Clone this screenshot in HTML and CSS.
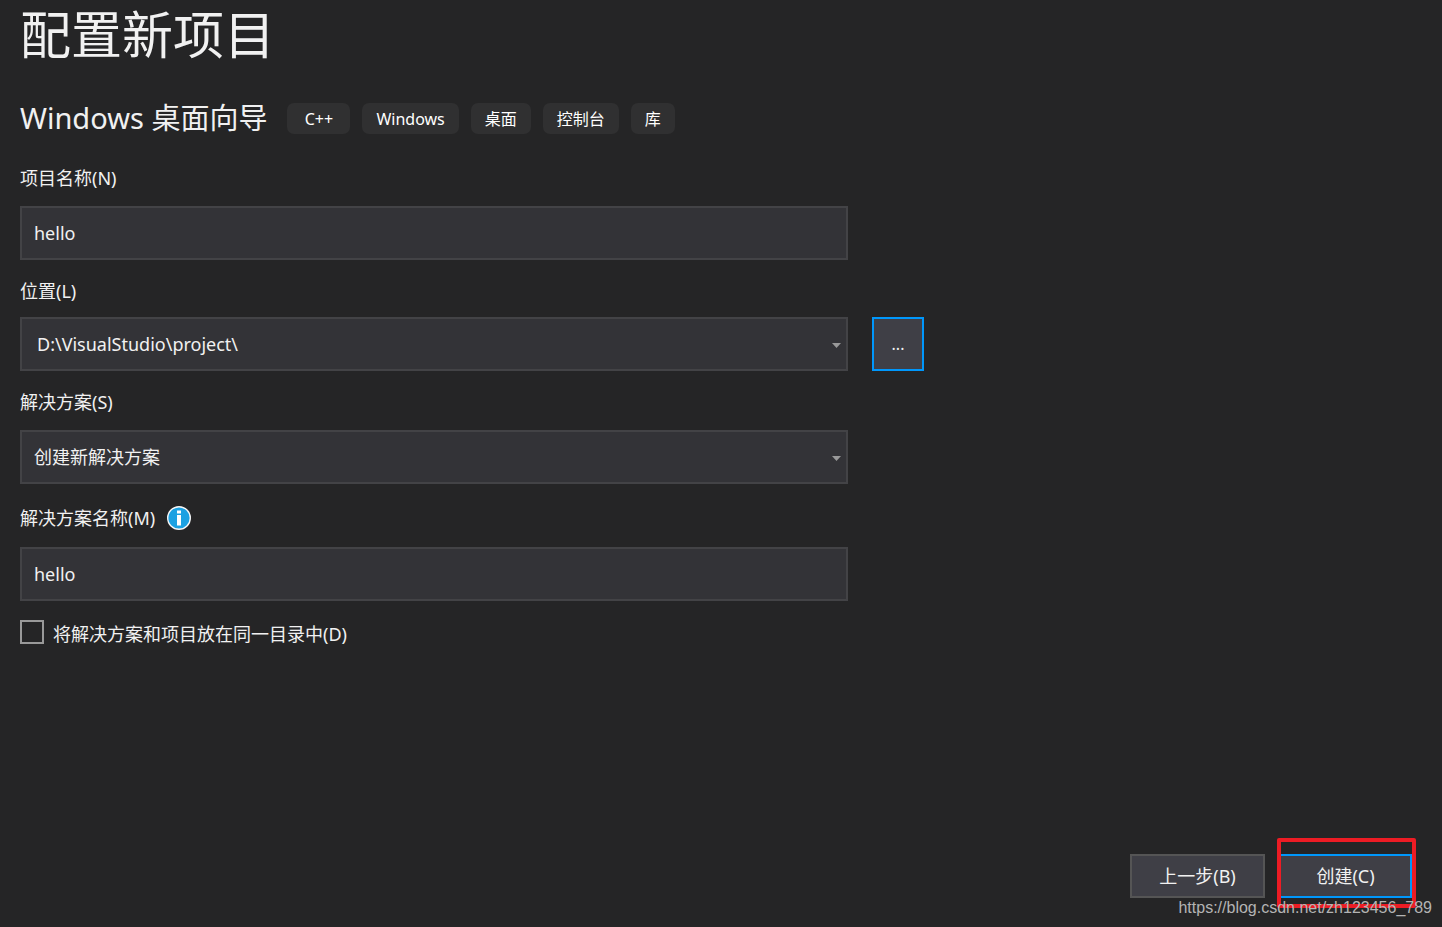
FILE: index.html
```html
<!DOCTYPE html>
<html lang="zh-CN">
<head>
<meta charset="utf-8">
<meta name="viewport" content="width=device-width, initial-scale=1">
<title>配置新项目</title>
<link rel="stylesheet" href="styles.css">
</head>
<body>
<form class="page">
  <h1 class="title">配置新项目</h1>
  <div class="template">
    <h2 class="template-name">Windows 桌面向导</h2>
    <ul class="tags">
      <li class="tag tag-language">C++</li>
      <li class="tag">Windows</li>
      <li class="tag">桌面</li>
      <li class="tag">控制台</li>
      <li class="tag">库</li>
    </ul>
  </div>

  <div class="fields">
    <div class="field">
      <label class="label" for="project-name">项目名称(N)</label>
      <input class="box" id="project-name" type="text" value="hello">
    </div>
    <div class="field field-location">
      <label class="label" for="location">位置(L)</label>
      <div class="location-row">
        <div class="combo">
          <select class="box box-path" id="location"><option>D:\VisualStudio\project\</option></select>
          <svg class="arrow" viewBox="0 0 9 5" aria-hidden="true"><path d="M0 0h9L4.500 5z"/></svg>
        </div>
        <button class="button browse" type="button">...</button>
      </div>
    </div>
    <div class="field">
      <label class="label" for="solution">解决方案(S)</label>
      <div class="combo">
        <select class="box" id="solution"><option>创建新解决方案</option></select>
        <svg class="arrow" viewBox="0 0 9 5" aria-hidden="true"><path d="M0 0h9L4.500 5z"/></svg>
      </div>
    </div>
    <div class="field field-solution-name">
      <div class="label-row">
        <label class="label" for="solution-name">解决方案名称(M)</label>
        <svg class="info" viewBox="0 0 24 24" aria-hidden="true">
          <circle cx="12" cy="12" r="11.300" fill="#1ba1e2" stroke="#f5f5f5" stroke-width="1.400"/>
          <path fill="#fff" d="M10 4.500h4v3h-4zM10 9h4v10.500h-4z"/>
        </svg>
      </div>
      <input class="box" id="solution-name" type="text" value="hello">
    </div>
    <div class="check">
      <input class="check-box" id="same-dir" type="checkbox">
      <label class="label" for="same-dir">将解决方案和项目放在同一目录中(D)</label>
    </div>
  </div>

  <div class="actions">
    <button class="button" type="button">上一步(B)</button>
    <div class="highlight">
      <button class="button button-primary" type="submit">创建(C)</button>
    </div>
  </div>
  <div class="watermark">https://blog.csdn.net/zh123456_789</div>
</form>
</body>
</html>
```
FILE: styles.css
```css
* {
  box-sizing: border-box;
}

body {
  margin: 0;
  background: #252526;
  color: #f1f1f1;
  font-family: "Noto Sans", "Noto Sans CJK SC", sans-serif;
  font-size: 18px;
  line-height: 28px;
}

.page {
  position: relative;
  display: flex;
  flex-direction: column;
  min-height: 100vh;
  padding: 0 26px 19px 20px;
}

.title {
  margin: 0;
  font-size: 51px;
  font-weight: 400;
  line-height: 68px;
}

.template {
  display: flex;
  flex-wrap: wrap;
  align-items: center;
  gap: 20px;
  margin-top: 31px;
}

.template-name {
  margin: 0;
  font-size: 29px;
  font-weight: 400;
  line-height: 38px;
}

.tags {
  display: flex;
  flex-wrap: wrap;
  gap: 12px;
  margin: 0;
  padding: 0;
  list-style: none;
}

.tag {
  padding: 1px 14px 0;
  border-radius: 7px;
  background: #303031;
  color: #fff;
  font-size: 16px;
  line-height: 30px;
}

.tag-language {
  min-width: 63px;
  text-align: center;
}

.fields {
  display: flex;
  flex-direction: column;
  gap: 17px;
  max-width: 828px;
  margin-top: 27px;
}

.field {
  display: flex;
  flex-direction: column;
  gap: 14px;
}

.field-location {
  gap: 12px;
}

.field-solution-name {
  gap: 15px;
  margin-top: 3px;
}

.label-row {
  display: flex;
  align-items: center;
  gap: 12px;
}

.info {
  width: 24px;
  height: 24px;
}

.combo {
  position: relative;
  flex: 0 0 100%;
}

.location-row {
  display: flex;
  gap: 24px;
}

.box {
  display: block;
  width: 100%;
  height: 54px;
  padding: 0 12px;
  border: 2px solid #434346;
  border-radius: 0;
  background: #333337;
  color: #f1f1f1;
  font: inherit;
  appearance: none;
}

.box-path {
  padding-left: 15px;
}

.arrow {
  position: absolute;
  top: 26px;
  right: 7px;
  width: 9px;
  height: 5px;
  fill: #999;
  pointer-events: none;
}

.button {
  min-width: 135px;
  height: 44px;
  padding: 0 12px;
  border: 2px solid #555;
  background: #3f3f46;
  color: #f1f1f1;
  font: inherit;
}

.browse {
  flex: none;
  min-width: 52px;
  height: 54px;
  border-color: #0097fb;
  font-size: 16px;
}

.check {
  display: flex;
  align-items: flex-start;
  gap: 9px;
  margin-top: 2px;
}

.check-box {
  width: 24px;
  height: 24px;
  margin: 0;
  border: 2px solid #999;
  background: #252526;
  appearance: none;
}

.actions {
  display: flex;
  flex-wrap: wrap;
  justify-content: flex-end;
  align-items: baseline;
  gap: 12px;
  margin-top: auto;
}

.highlight {
  padding: 12px 0 6px;
  border: 4px solid #ed1c24;
  border-radius: 2px;
}

.highlight .button {
  display: block;
  min-width: 131px;
}

.button-primary {
  border-color: #0097fb;
  border-left-width: 0;
}

.watermark {
  position: absolute;
  right: 10px;
  bottom: 5px;
  color: #b4b4b4;
  font-family: "Liberation Sans", Arial, sans-serif;
  font-size: 16px;
  pointer-events: none;
}
```
